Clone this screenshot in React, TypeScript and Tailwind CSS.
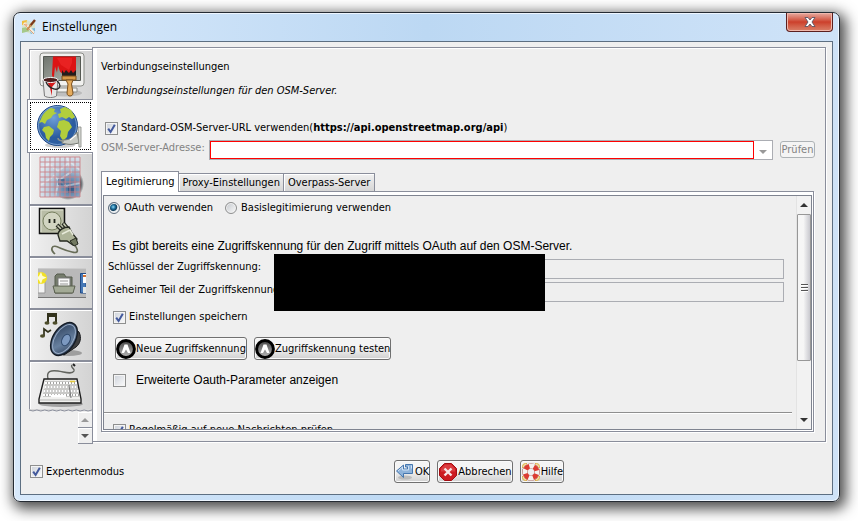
import { ReactNode } from 'react';

interface CheckProps {
  id: string;
  label: ReactNode;
  checked?: boolean;
  gap?: string;
  className?: string;
}

function Check({ id, label, checked, gap = 'gap-[3px]', className = '' }: CheckProps) {
  return (
    <div className={`flex h-4 items-center ${gap} ${className}`}>
      <span className="grid size-[13px] shrink-0">
        <input
          id={id}
          type="checkbox"
          defaultChecked={checked}
          className="peer col-start-1 row-start-1 size-[13px] appearance-none border border-[#8e8f8f] bg-linear-to-br from-[#cdd2da] to-[#fbfbfb] shadow-[inset_0_0_0_1px_#f4f4f4]"
        />
        <svg
          viewBox="0 0 13 13"
          className="pointer-events-none invisible col-start-1 row-start-1 size-[13px] peer-checked:visible"
        >
          <path d="M3.2 6.6 L5.6 10 L9.8 2.8" fill="none" stroke="#43599c" strokeWidth="2" />
        </svg>
      </span>
      <label htmlFor={id} className="whitespace-nowrap">
        {label}
      </label>
    </div>
  );
}

function Radio({ id, label, checked }: { id: string; label: string; checked?: boolean }) {
  return (
    <div className="flex h-4 items-center gap-1">
      <input
        id={id}
        type="radio"
        name="auth"
        defaultChecked={checked}
        className="size-3 appearance-none rounded-full border border-[#8e8f8f] bg-linear-to-br from-[#c4c8cd] to-[#fafafa] shadow-[inset_0_0_0_1px_#f2f2f2] checked:border-[#5d6c7c] checked:bg-[radial-gradient(circle_at_42%_40%,#8fd8f5_0,#1c6f9c_25%,#123f5c_42%,#e8eef2_55%)]"
      />
      <label htmlFor={id} className="whitespace-nowrap">
        {label}
      </label>
    </div>
  );
}

function ToolButton({ icon, children }: { icon: ReactNode; children: ReactNode }) {
  return (
    <button className="flex h-[23px] items-center rounded-[3px] border border-[#707070] bg-linear-to-b from-[#f4f4f4] from-45% to-[#d0d0d0] whitespace-nowrap shadow-[inset_0_0_0_1px_#fafafa]">
      {icon}
      {children}
    </button>
  );
}

function TitleIcon() {
  return (
    <svg viewBox="0 0 16 16" className="size-4">
      <path d="M1 2 L6 1 L10 3 L14 2 L14 13 L10 15 L5 13 L1 14Z" fill="#d8e4cf" />
      <path d="M1 2 L6 1 L5 5 L1 6Z" fill="#f0bd3c" />
      <path d="M1 9 L6 8 L9 12 L5 13 L1 14Z" fill="#a5c98a" />
      <path d="M8 10 L14 9 L14 14 L10 15Z" fill="#7db8dd" />
      <path d="M3 4 L13 14" stroke="#f3efe0" strokeWidth="3" />
      <path d="M3 5 L13 15" stroke="#e0a27c" strokeWidth="1" />
      <path d="M14 1 L9 7" stroke="#7c3a1c" strokeWidth="2.4" />
      <path d="M10 6 L6 11" stroke="#c98a4c" strokeWidth="2" />
      <circle cx="5" cy="6" r="1.5" fill="#f0b48c" />
    </svg>
  );
}

function DisplayIcon() {
  return (
    <svg viewBox="0 0 48 48" className="size-12">
      <defs>
        <linearGradient id="screen" x2="1" y2="1">
          <stop offset="0" stopColor="#6f746d" />
          <stop offset="1" stopColor="#b3b7b0" />
        </linearGradient>
      </defs>
      <ellipse cx="27" cy="42" rx="17" ry="3.5" fill="#a9a9a9" opacity=".6" />
      <path d="M14 37h25v4H14z" fill="#f4f4f2" stroke="#8b8d88" />
      <rect x="2" y="2" width="44" height="33" rx="3" fill="#f1f1ef" stroke="#8b8d88" />
      <path d="M5.500 5.500h37v24h-37z" fill="url(#screen)" stroke="#555953" />
      <path d="M15 5.500h23v18H25l-3-3-2-6-1 7-2-6-1 10c-1 1-2 0-2-2z" fill="#dc1414" />
      <path d="M19 7h15v5l-3 7-8-5z" fill="#f12b2b" opacity=".6" />
      <path d="M24 19l2 3 2-3 3 3 2-3 2 3 3-3v7H24z" fill="#241d1c" />
      <path d="M24 25h14v4H24z" fill="#d79a49" stroke="#7c501d" />
      <path d="M28 29h7l-1.500 4 1.500 9c0 4-6 4-6 0l1-9z" fill="#e5ac5d" stroke="#7c501d" />
      <path d="M5 29l1.500 16c3 2 9 2 12 0l1.500-16z" fill="#e6e6e6" stroke="#777" />
      <path d="M9 30h10l-5 6v9l-2-8z" fill="#d51b1b" />
      <ellipse cx="12.500" cy="29" rx="7.500" ry="2.500" fill="#4c1c1c" stroke="#f5f5f5" />
      <path d="M8 31c3 7 13 10 14 4 0-3-2-4-3-5" fill="none" stroke="#262626" strokeWidth="1.300" />
    </svg>
  );
}

function ConnectionIcon() {
  return (
    <svg viewBox="0 0 48 48" className="size-12">
      <defs>
        <radialGradient id="ocean" cx=".4" cy=".3">
          <stop offset="0" stopColor="#6f9fd8" />
          <stop offset="1" stopColor="#2b5c9f" />
        </radialGradient>
      </defs>
      <ellipse cx="24" cy="43" rx="15" ry="3" fill="#bbb" opacity=".7" />
      <circle cx="21.500" cy="23.500" r="20" fill="url(#ocean)" stroke="#204a87" />
      <circle cx="21.500" cy="23.500" r="19" fill="none" stroke="#86abd9" strokeWidth=".8" />
      <path d="M5 17c2-6 6-9 10-11l4 1-1 3 3 1-4 2-2 3-4 2-2 4-3-2-3 1z" fill="#b2ce3c" />
      <path d="M8 25l5-1 5 4-1 4-3 3-1 4-3-3-1-5-3-3z" fill="#b2ce3c" />
      <path d="M24 7l5-2 6 3 4 7-3 2-3-2-3 2-4-2-3 1-1-4 3-1z" fill="#b2ce3c" />
      <path d="M23 19l5-1 5 2 3 5-4 5-1 5-4 4-3-5 1-5-4-4z" fill="#b2ce3c" />
      <path d="M26 38c6 0 8-1 11-3l4-5 2 11-5 1c-4 1-8 0-12-1z" fill="#c7cac3" stroke="#747872" />
      <path d="M42 25h3v20h-2z" fill="#d9dbd6" stroke="#858983" strokeWidth=".8" />
      <path d="M28 39c-5 0-6-2-6-3" fill="none" stroke="#8b908a" strokeWidth="1.500" />
      <path d="M34 38l6-5" stroke="#fff" strokeWidth="1.200" />
    </svg>
  );
}

function MapIcon() {
  const lines = [2, 7, 12, 17, 22, 27, 32, 37, 42];
  return (
    <svg viewBox="0 0 48 48" className="size-12">
      <defs>
        <radialGradient id="mapfade" cx=".75" cy=".75" r=".8">
          <stop offset="0" stopColor="#3c6894" />
          <stop offset=".35" stopColor="#7f9fbe" />
          <stop offset=".6" stopColor="#b5c8d9" />
          <stop offset="1" stopColor="#dbe5ee" />
        </radialGradient>
        <radialGradient id="mapshade">
          <stop offset=".75" stopColor="#303840" />
          <stop offset="1" stopColor="#303840" stopOpacity="0" />
        </radialGradient>
      </defs>
      <circle cx="30" cy="29" r="16" fill="url(#mapshade)" />
      <path d="M2 2h40v40H2z" fill="url(#mapfade)" />
      <path d="M2 13l9-4 9 7 12-9 10 8M3 30l13-9 12 10 14-3M17 42l4-17 12-8-4-15" fill="none" stroke="#edf4f8" strokeWidth="2" opacity=".5" />
      <path d="M20 24h7v6h-7zM30 31h6v7h-6z" fill="#194675" opacity=".5" />
      {lines.map((n) => (
        <path key={n} d={`M2 ${n}h40M${n} 2v40`} stroke="#cc7f84" strokeWidth="1" opacity=".85" />
      ))}
    </svg>
  );
}

function PluginIcon() {
  return (
    <svg viewBox="0 0 48 48" className="size-12">
      <path d="M1.500 1.500h25v25h-25z" fill="#b9bda7" stroke="#111" strokeWidth="1.500" />
      <path d="M3 25V3h22" fill="none" stroke="#e1e4d4" />
      <circle cx="14" cy="14" r="9" fill="#d2d5c2" stroke="#77805f" />
      <path d="M11.500 12v4M16.500 12v4" stroke="#20231c" strokeWidth="1.800" />
      <path d="M35 36c6 7 6 11-1 9-11-2-18-9-20-4-1 3 1 4 3 6" fill="none" stroke="#686d58" strokeWidth="1.700" />
      <path d="M19 18l6 6M25 16l5 6" stroke="#262a21" strokeWidth="4" />
      <path d="M19.500 18.500l5 5M25.500 16.500l4 5" stroke="#c9ceb7" strokeWidth="1.500" />
      <path d="M20 28c0-5 6-8 11-8l3 6 5 6-4 6-6-4-7 0z" fill="#aeb499" stroke="#262a21" strokeWidth="1.300" />
      <path d="M24 27l8-4 3 5" fill="none" stroke="#e7ead9" strokeWidth="1.500" />
      <path d="M32 34l6-3 2 6-4 2z" fill="#727961" stroke="#262a21" />
    </svg>
  );
}

function ToolbarIcon() {
  return (
    <svg viewBox="0 0 48 48" className="size-12">
      <path d="M0 9h48v30H0z" fill="#b9b9b9" />
      <path d="M0 9.500h48" stroke="#ccc" />
      <path d="M0 38.500h48" stroke="#777" />
      <path d="M0 17h7v17H0z" fill="#f4f4f4" stroke="#999" />
      <circle cx="3" cy="19" r="6" fill="#f2e126" />
      <path d="M3 13l1.500 4 4 1.500-4 2L3 25l-2-4-3-2 3-2z" fill="#fffdd0" />
      <path d="M17 34V17l2-2h7l2 3h6v16z" fill="#757c6c" stroke="#555b4d" />
      <path d="M20 19h12v11H20z" fill="#f8f8f8" stroke="#777" />
      <path d="M22 22h8M22 25h8" stroke="#999" />
      <path d="M15 27h22l-2 7H17z" fill="#a3aa96" stroke="#5a604f" />
      <path d="M42.500 14.500H48V34h-5.500z" fill="#4779b7" stroke="#204a87" />
      <path d="M45 15h3v9h-3z" fill="#fff" />
      <path d="M45 17h3" stroke="#d57231" strokeWidth="2" />
      <path d="M45 28h3v6h-3z" fill="#e4e8e8" />
    </svg>
  );
}

function AudioIcon() {
  return (
    <svg viewBox="0 0 48 48" className="size-12">
      <defs>
        <linearGradient id="cone" x2="1" y2="1">
          <stop offset="0" stopColor="#243753" />
          <stop offset=".6" stopColor="#67809f" />
          <stop offset="1" stopColor="#25364f" />
        </linearGradient>
      </defs>
      <ellipse cx="31" cy="42" rx="13" ry="3" fill="#777" opacity=".6" />
      <path d="M33 15l8 6c3 6 1 12-3 15l-12 8-6-3z" fill="#3e3f40" stroke="#191b1e" />
      <ellipse cx="26" cy="28" rx="11" ry="18" transform="rotate(32 26 28)" fill="url(#cone)" stroke="#151c26" strokeWidth="1.500" />
      <ellipse cx="26" cy="28" rx="9" ry="16" transform="rotate(32 26 28)" fill="none" stroke="#9eb0c9" strokeWidth=".9" />
      <ellipse cx="28" cy="29" rx="4" ry="6" transform="rotate(27 28 29)" fill="#7c99c0" stroke="#2f496c" />
      <path d="M10 12V3h8v9M10 5h8" fill="none" stroke="#32321c" strokeWidth="2" />
      <ellipse cx="9" cy="12" rx="2.500" ry="1.800" fill="#4d4d2b" />
      <ellipse cx="17" cy="12" rx="2.500" ry="1.800" fill="#4d4d2b" />
      <path d="M6 25v-7l4 3 3-2" fill="none" stroke="#32321c" strokeWidth="1.700" />
      <ellipse cx="4.500" cy="25" rx="2.500" ry="1.800" fill="#4d4d2b" />
    </svg>
  );
}

function KeyboardIcon() {
  return (
    <svg viewBox="0 0 48 48" className="size-12">
      <ellipse cx="23" cy="42" rx="22" ry="3" fill="#777" opacity=".6" />
      <path d="M10 17C8 9 13 8 20 9s14 4 16 0c1-3-4-3-2-6" fill="none" stroke="#62645f" strokeWidth="1.400" />
      <path d="M35 2l2 2" stroke="#222" strokeWidth="2" />
      <path d="M6 17h33l4 20v4H1v-4z" fill="#f0f0ee" stroke="#1f1f1f" strokeWidth="1.400" />
      <path d="M2 38h40" stroke="#b8b8b6" />
      <path d="M7 21h32M6.500 25h33M5.500 29h35M5 33h36" stroke="#a1a19f" strokeWidth="3.200" />
      <path d="M7 21h32M6.500 25h33M5.500 29h35M5 33h36" stroke="#fff" strokeWidth="2" strokeDasharray="2 1" />
      <path d="M13 34h15" stroke="#fff" strokeWidth="2.500" />
      <path d="M32 19.500h5" stroke="#e3c93c" strokeWidth="1.600" />
      <path d="M31 23l2 13" stroke="#777" />
    </svg>
  );
}

function OAuthIcon() {
  return (
    <svg viewBox="0 0 20 20" className="size-5">
      <defs>
        <linearGradient id="oauth" y2="1" x2="0">
          <stop offset="0" stopColor="#444" />
          <stop offset="1" stopColor="#bbb" />
        </linearGradient>
      </defs>
      <circle cx="10" cy="10" r="8.400" fill="url(#oauth)" stroke="#000" strokeWidth="3" />
      <path d="M8.500 5.500h3l3 8.500h-2.500l-2-3.500-2 3.500H5.500z" fill="#fff" />
    </svg>
  );
}

function OkIcon() {
  return (
    <svg viewBox="0 0 20 20" className="size-5">
      <ellipse cx="10" cy="15.500" rx="7" ry="2" fill="#999" opacity=".5" />
      <path d="M17.500 2.500v9h-9v4L1.500 9l7-6v4h4V5h-2V2.500z" fill="#8fb3da" stroke="#4576ae" />
      <path d="M16.500 3.500v3M3 9l4.500-4v3h6V4" fill="none" stroke="#d1e2f4" />
    </svg>
  );
}

function CancelIcon() {
  return (
    <svg viewBox="0 0 20 20" className="size-5">
      <path d="M6.500 1.500h7l5 5v7l-5 5h-7l-5-5v-7z" fill="#cc1b20" stroke="#a30d12" />
      <path d="M7 2.500h6l4 4v3H3V6.500z" fill="#e25357" opacity=".6" />
      <path d="M6.500 6.500l7 7M13.500 6.500l-7 7" stroke="#f6e6e6" strokeWidth="2.400" />
    </svg>
  );
}

function HelpIcon() {
  return (
    <svg viewBox="0 0 20 20" className="size-5">
      <rect x="1.500" y="1.500" width="17" height="17" rx="3" fill="#f6e3a4" stroke="#dcb04a" />
      <path d="M6 1h8M6 19h8M1 6v8M19 6v8" stroke="#efefef" strokeWidth="2" />
      <circle cx="10" cy="10" r="6" fill="#efefef" stroke="#9a4a44" strokeWidth="5.600" />
      <circle cx="10" cy="10" r="6" fill="none" stroke="#f4f2ef" strokeWidth="4.800" />
      <circle cx="10" cy="10" r="6" fill="none" stroke="#dc3b31" strokeWidth="4.800" strokeDasharray="4.700 4.725" strokeDashoffset="-2.300" />
    </svg>
  );
}

const sections = [
  { name: 'Anzeige', icon: <DisplayIcon />, size: 'h-[50px]' },
  { name: 'Verbindung', icon: <ConnectionIcon />, size: 'h-[54px]' },
  { name: 'Karte', icon: <MapIcon />, size: 'h-[53px]' },
  { name: 'Plugins', icon: <PluginIcon />, size: 'h-[52px]' },
  { name: 'Werkzeugleiste', icon: <ToolbarIcon />, size: 'h-[52px]' },
  { name: 'Audio', icon: <AudioIcon />, size: 'h-[52px]' },
  { name: 'Tastenkürzel', icon: <KeyboardIcon />, size: 'h-[47px]' },
];

function Sidebar() {
  return (
    <nav className="flex w-[65px] shrink-0 flex-col pt-[2px]">
      {sections.map((s, i) =>
        i === 1 ? (
          <button
            key={s.name}
            aria-label={s.name}
            className={`relative z-10 -mr-px shrink-0 border border-r-0 border-[#8a8e9b] bg-white p-[2px] ${s.size}`}
          >
            <span className="flex h-full items-center justify-center border border-dotted border-black pr-px">{s.icon}</span>
          </button>
        ) : (
          <button
            key={s.name}
            aria-label={s.name}
            className={`ml-[2px] flex shrink-0 items-center justify-center overflow-hidden border-l border-[#8a8e9b] bg-linear-to-r from-[#f0f0f0] to-[#d3d3d3] pl-[2px] shadow-[inset_1px_1px_0_#fff] ${
              i === 0 ? 'border-t' : i < 6 ? 'border-b-2' : ''
            } ${s.size}`}
          >
            {s.icon}
          </button>
        ),
      )}
      {/* torn edge under the last visible tab */}
      <svg viewBox="0 0 64 3" preserveAspectRatio="none" className="ml-[2px] h-[3px] w-[63px] shrink-0">
        <path d="M0 0h64v1l-4 1-4-1-4 1-4-1-4 1-4-1-4 1-4-1-4 1-4-1-4 1-4-1-4 1-4-1-4 1-4-1-4 1z" fill="#d9d9d9" />
        <path d="M0 1l4 1 4-1 4 1 4-1 4 1 4-1 4 1 4-1 4 1 4-1 4 1 4-1 4 1 4-1 4 1 4-1" fill="none" stroke="#8a8e9b" />
      </svg>
      <div className="relative z-10 -mr-px flex flex-col items-end">
        <button aria-label="Nach oben" className="flex h-4 w-[15px] items-center justify-center border-r border-b border-[#8a8e9b] bg-[#efefef] shadow-[inset_1px_1px_0_#fff]">
          <svg viewBox="0 0 8 4" className="h-1 w-2"><path d="M4 0l4 4H0z" fill="#999" /></svg>
        </button>
        <button aria-label="Nach unten" className="flex h-4 w-[15px] items-center justify-center border-r border-b border-[#8a8e9b] bg-[#efefef] shadow-[inset_1px_1px_0_#fff]">
          <svg viewBox="0 0 8 4" className="h-1 w-2"><path d="M4 4L0 0h8z" fill="#555" /></svg>
        </button>
      </div>
    </nav>
  );
}

function Scrollbar() {
  return (
    <div className="flex w-[15px] shrink-0 flex-col border-l border-[#e3e3e3] bg-[#f2f2f2]">
      <button aria-label="Hoch" className="flex h-[18px] items-center justify-center">
        <svg viewBox="0 0 8 4" className="h-1 w-2"><path d="M4 0l4 4H0z" fill="#333" /></svg>
      </button>
      <div className="flex basis-[147px] flex-col items-center justify-center gap-px rounded-[1px] border border-[#979797] bg-linear-to-r from-[#f6f6f6] from-45% to-[#c9c9cf]">
        <span className="h-[2px] w-[7px] border-b border-white bg-[#555]" />
        <span className="h-[2px] w-[7px] border-b border-white bg-[#555]" />
        <span className="h-[2px] w-[7px] border-b border-white bg-[#555]" />
      </div>
      <button aria-label="Runter" className="mt-auto flex h-[18px] items-center justify-center">
        <svg viewBox="0 0 8 4" className="h-1 w-2"><path d="M4 4L0 0h8z" fill="#333" /></svg>
      </button>
    </div>
  );
}

function AuthPane() {
  return (
    <div className="mr-px flex min-h-0 flex-1 border border-[#8a8e9b] bg-white p-px pt-[3px] shadow-[1px_1px_0_#fff]">
      <div className="flex min-w-0 flex-1 overflow-hidden border border-[#7f8490] bg-[#efefef]">
        <div className="min-w-0 flex-1 overflow-hidden pt-1">
          <div className="flex gap-3 pl-1">
            <Radio id="oauth-use" label="OAuth verwenden" checked />
            <Radio id="basic-use" label="Basislegitimierung verwenden" />
          </div>
          <p className="mt-[22px] pl-2 font-['Liberation_Sans',Arial,sans-serif] text-xs leading-4 whitespace-nowrap">
            Es gibt bereits eine Zugriffskennung für den Zugriff mittels OAuth auf den OSM-Server.
          </p>
          <div className="relative mt-[5px] mr-3 ml-1 grid grid-cols-[auto_1fr] gap-x-1 gap-y-[3px]">
            <label htmlFor="key" className="leading-4">Schlüssel der Zugriffskennung:</label>
            <input id="key" readOnly className="h-5 min-w-0 border border-[#abadb3] bg-[#efefef]" />
            <label htmlFor="secret" className="leading-4">Geheimer Teil der Zugriffskennung:</label>
            <input id="secret" readOnly className="h-5 min-w-0 border border-[#abadb3] bg-[#efefef]" />
            <div className="absolute -top-[5px] left-[166px] h-[57px] w-[271px] bg-black" />
          </div>
          <Check id="save" label="Einstellungen speichern" checked className="mt-[7px] pl-[9px]" />
          <div className="mt-3 flex gap-[7px] pl-[11px]">
            <ToolButton icon={<OAuthIcon />}>Neue Zugriffskennung</ToolButton>
            <ToolButton icon={<OAuthIcon />}>Zugriffskennung testen</ToolButton>
          </div>
          <Check
            id="advanced"
            label="Erweiterte Oauth-Parameter anzeigen"
            gap="gap-[10px]"
            className="mt-3 pl-[9px] font-['Liberation_Sans',Arial,sans-serif] text-xs"
          />
          <hr className="mt-6 mr-1 h-[2px] border-t border-b border-t-[#8f8f8f] border-b-white" />
          <Check id="news" label="Regelmäßig auf neue Nachrichten prüfen" checked className="mt-2 pl-[9px]" />
        </div>
        <Scrollbar />
      </div>
    </div>
  );
}

export default function App() {
  return (
    <main className="flex h-screen flex-col overflow-hidden bg-white pt-3 pr-[18px] pb-[19px] pl-[13px] font-['DejaVu_Sans_Condensed','DejaVu_Sans',Tahoma,sans-serif] text-[11px] leading-4 text-black">
      <div className="flex min-h-0 flex-1 flex-col rounded-[7px] border border-[#252b33] bg-linear-to-r from-[#d8e9fb] via-[#bcd8f3] to-[#cfe3f8] px-[6px] pb-[6px] shadow-[inset_0_0_0_1px_#eef6ff,3px_4px_14px_3px_rgba(0,0,0,0.7)]">
        <header className="flex h-7 shrink-0 items-start justify-between">
          <div className="flex items-center gap-[5px] pt-[6px] pl-px font-['Open_Sans','Noto_Sans',sans-serif] text-xs leading-4">
            <TitleIcon />
            <h1>Einstellungen</h1>
          </div>
          <button
            aria-label="Schließen"
            className="flex h-[19px] w-[47px] items-center justify-center rounded-b-[4px] border border-t-0 border-[#5b1f1f] bg-linear-to-b from-[#e5aaa0] via-[#cc3f2b] via-50% to-[#d98069] shadow-[inset_0_0_0_1px_#f0b8ac]"
          >
            <svg viewBox="0 0 12 10" className="h-[10px] w-3">
              <path d="M1 .5h3l2 2.500 2-2.500h3L8 5l3 4.500H8L6 7 4 9.500H1L4 5z" fill="#fff" stroke="#5b5564" strokeWidth=".9" />
            </svg>
          </button>
        </header>

        <div className="flex min-h-0 flex-1 flex-col border border-[#5d6f82] bg-[#efefef] pt-[5px] pr-[6px] pl-[6px]">
          <div className="flex min-h-0 flex-1">
            <Sidebar />
            <section className="flex min-w-0 flex-1 flex-col border border-[#8a8e9b] shadow-[inset_4px_1px_0_#fff,1px_1px_0_#fff]">
              <div className="flex min-h-0 flex-1 flex-col pt-[11px] pr-[10px] pb-[9px] pl-2">
                <h2>Verbindungseinstellungen</h2>
                <p className="mt-2 pl-[5px] italic">Verbindungseinstellungen für den OSM-Server.</p>
                <Check
                  id="default-url"
                  checked
                  className="mt-[21px] pl-1"
                  label={
                    <>
                      Standard-OSM-Server-URL verwenden(<b>https://api.openstreetmap.org/api</b>)
                    </>
                  }
                />
                <div className="mt-1 flex items-start">
                  <label htmlFor="server" className="w-[108px] shrink-0 whitespace-nowrap text-[#838383]">
                    OSM-Server-Adresse:
                  </label>
                  <div className="flex h-5 min-w-0 flex-1 border border-[#abadb3] bg-white">
                    <input id="server" disabled className="min-w-0 flex-1 border border-[#f00] bg-white" />
                    <button disabled aria-label="Adressen" className="flex w-[18px] items-center justify-center pt-1">
                      <svg viewBox="0 0 8 4" className="h-1 w-2"><path d="M4 4L0 0h8z" fill="#999" /></svg>
                    </button>
                  </div>
                  <button disabled className="mt-px ml-[7px] h-[17px] w-[35px] rounded-[3px] border border-[#adb2b5] bg-[#f4f4f4] text-[#838383]">
                    <span className="flex justify-center leading-[15px]">Prüfen</span>
                  </button>
                </div>

                <div role="tablist" className="mt-[11px] flex h-5 shrink-0 items-end">
                  <button role="tab" aria-selected="true" className="relative z-10 -mb-px h-[21px] border border-b-0 border-[#8a8e9b] bg-white px-1">
                    Legitimierung
                  </button>
                  <button role="tab" className="h-[18px] border border-b-0 border-l-0 border-[#8a8e9b] bg-linear-to-b from-[#f1f1f1] to-[#d6d6d6] px-[3px] shadow-[inset_1px_1px_0_#fff]">
                    Proxy-Einstellungen
                  </button>
                  <button role="tab" className="h-[18px] border border-b-0 border-l-0 border-[#8a8e9b] bg-linear-to-b from-[#f1f1f1] to-[#d6d6d6] px-1 shadow-[inset_1px_1px_0_#fff]">
                    Overpass-Server
                  </button>
                </div>
                <AuthPane />
              </div>
            </section>
          </div>

          <footer className="flex h-[52px] shrink-0 items-center pt-[7px] pl-[3px]">
            <Check id="expert" label="Expertenmodus" checked />
            <div className="flex flex-1 justify-center gap-[7px] pl-2">
              <ToolButton icon={<OkIcon />}>OK</ToolButton>
              <ToolButton icon={<CancelIcon />}>Abbrechen</ToolButton>
              <ToolButton icon={<HelpIcon />}>Hilfe</ToolButton>
            </div>
          </footer>
        </div>
      </div>
    </main>
  );
}
